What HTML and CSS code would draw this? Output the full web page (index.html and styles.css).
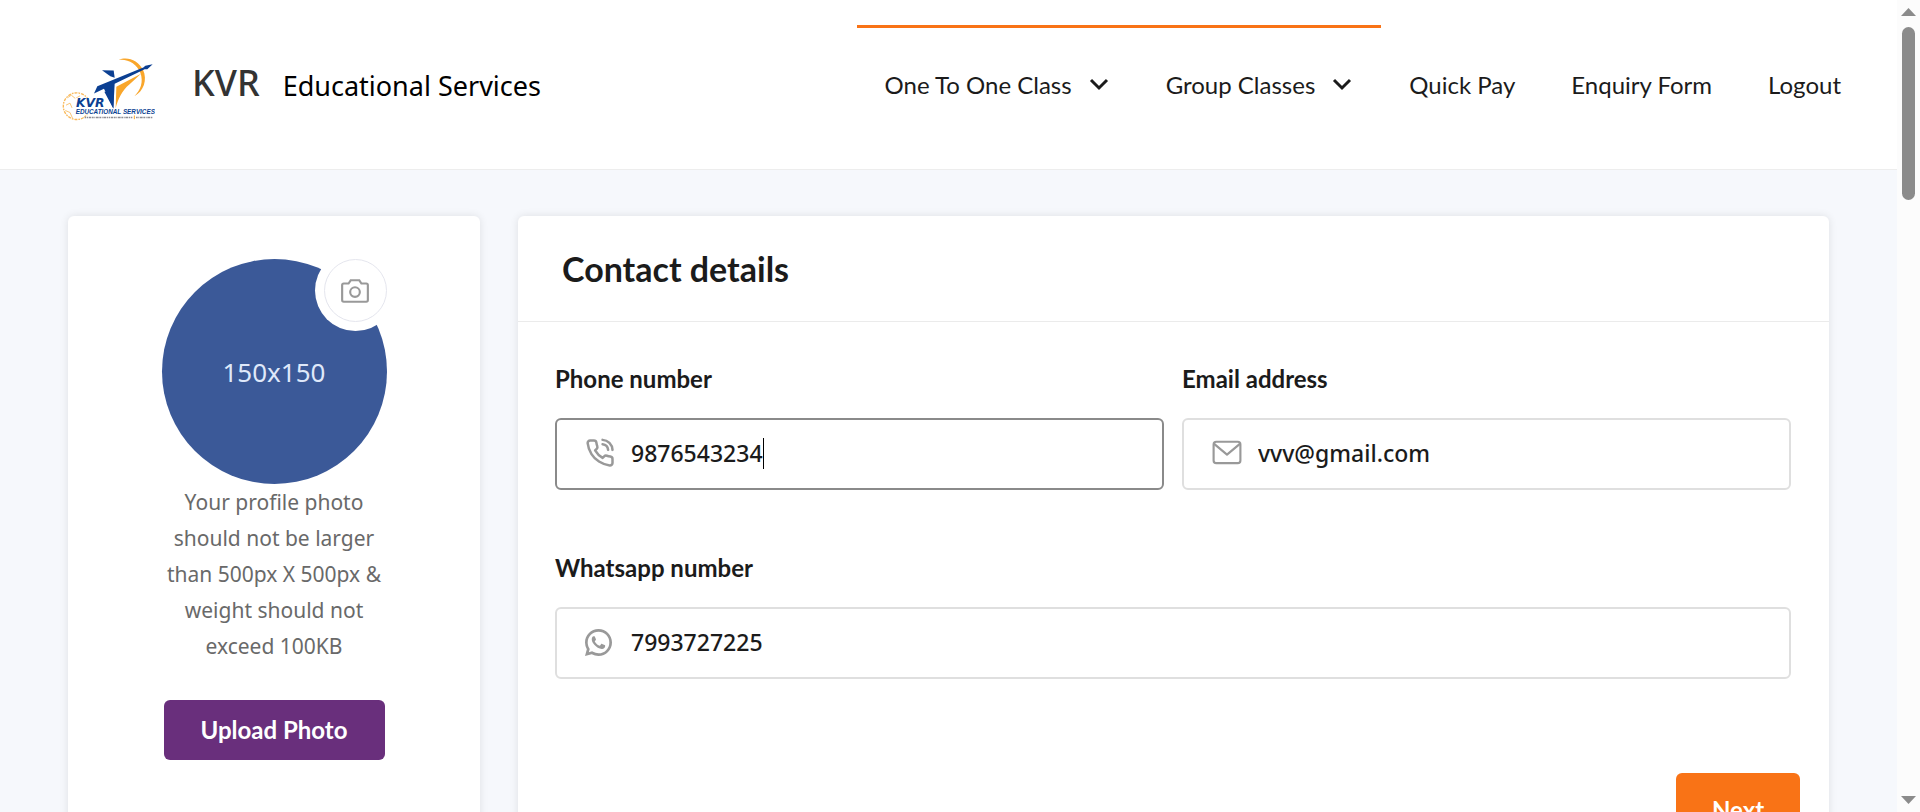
FILE: index.html
```html
<!DOCTYPE html>
<html lang="en">
<head>
<meta charset="utf-8">
<title>KVR Educational Services</title>
<link rel="stylesheet" href="styles.css">
</head>
<body>
<div class="page">
  <header class="header">
    <a class="brand" href="#">
      <svg class="logo" viewBox="60 40 285 200" aria-hidden="true">
        <path d="M236 54C262 42 296 56 309 84C323 114 311 149 283 163C302 146 311 120 301 93C291 66 263 50 236 54Z" fill="#f9a62b"/>
        <path d="M186 85L221 86L224 108L211 103Z" fill="#0b3f92"/>
        <path d="M162 155L172 133L310 77L316 72L338 67L322 82L314 82L224 126L220 200L192 141Z" fill="#0b3f92"/>
        <path d="M229 135L303 96L268 128C246 146 234 172 227 199Z" fill="#f9a62b"/>
        <circle cx="110" cy="193" r="40" fill="none" stroke="#f9b95a" stroke-width="4" stroke-dasharray="9 3 5 3" pathLength="250"/>
        <path d="M82 168L94 160L106 170L120 162M78 190L90 184L96 198M76 206L90 212L98 230" fill="none" stroke="#f9c679" stroke-width="3"/>
        <rect x="106" y="168" width="88" height="50" fill="#fff"/>
        <path d="M193 150L222 150L220 200L205 172Z" fill="#0b3f92"/>
        <text class="logo-name" x="108" y="197">KVR</text>
        <text class="logo-sub" x="107" y="216">EDUCATIONAL SERVICES</text>
        <path d="M134 227H279M288 227H338" stroke="#8d8d95" stroke-width="5" stroke-dasharray="5 2 3 2 8 2"/>
        <path d="M283 221V232" stroke="#f9a62b" stroke-width="3"/>
      </svg>
      <span class="brand-name">KVR</span>
      <span class="brand-sub">Educational Services</span>
    </a>
    <nav>
      <ul class="menu">
        <li class="marked"><a href="#">One To One Class <svg class="chevron" viewBox="0 0 22 22"><path d="M3 6L11 14L19 6"/></svg></a></li>
        <li class="marked"><a href="#">Group Classes <svg class="chevron" viewBox="0 0 22 22"><path d="M3 6L11 14L19 6"/></svg></a></li>
        <li><a href="#">Quick Pay</a></li>
        <li><a href="#">Enquiry Form</a></li>
        <li><a href="#">Logout</a></li>
      </ul>
    </nav>
  </header>
  <main class="content">
    <aside class="card profile">
      <div class="avatar">
        <span>150x150</span>
        <button class="camera" type="button" aria-label="Change photo">
          <svg viewBox="0 0 28 24"><path d="M8 5L10 2H18L20 5H24.500Q26 5 26 6.500V20.500Q26 22 24.500 22H3.500Q2 22 2 20.500V6.500Q2 5 3.500 5Z"/><circle cx="14" cy="13" r="4.500"/></svg>
        </button>
      </div>
      <p class="hint">Your profile photo should not be larger than 500px X 500px &amp; weight should not exceed 100KB</p>
      <button class="button upload" type="button">Upload Photo</button>
    </aside>
    <form class="card details">
      <h1 class="title">Contact details</h1>
      <div class="fields">
        <div class="field">
          <label for="phone">Phone number</label>
          <div class="control focused">
            <svg viewBox="0 0 24 24"><path d="M22 16.920v3a2 2 0 0 1-2.180 2 19.790 19.790 0 0 1-8.630-3.070 19.500 19.500 0 0 1-6-6A19.790 19.790 0 0 1 2.120 4.180 2 2 0 0 1 4.110 2h3a2 2 0 0 1 2 1.720c.127.960.361 1.903.7 2.810a2 2 0 0 1-.45 2.110L8.090 9.910a16 16 0 0 0 6 6l1.270-1.270a2 2 0 0 1 2.110-.45c.907.339 1.850.573 2.810.7A2 2 0 0 1 22 16.920zM14.050 5A5 5 0 0 1 18.500 9.500M14.050 1.500A8.500 8.500 0 0 1 22 9.500"/></svg>
            <input id="phone" class="sized" type="tel" value="9876543234"><span class="caret"></span>
          </div>
        </div>
        <div class="field">
          <label for="email">Email address</label>
          <div class="control">
            <svg viewBox="0 0 28 28"><rect x="1.500" y="3.500" width="25" height="20" rx="2.500"/><path d="M2 5.500L14 15.500L26 5.500"/></svg>
            <input id="email" type="email" value="vvv@gmail.com">
          </div>
        </div>
        <div class="field wide">
          <label for="whatsapp">Whatsapp number</label>
          <div class="control">
            <svg class="filled" viewBox="2 2 20 20"><path d="M7.254 18.494l.724.423A7.950 7.950 0 0 0 12 20a8 8 0 1 0-8-8c0 1.436.377 2.813 1.084 4.024l.423.724-.653 2.401 2.400-.655zM2.005 22l1.352-4.968A9.954 9.954 0 0 1 2 12C2 6.477 6.477 2 12 2s10 4.477 10 10-4.477 10-10 10a9.954 9.954 0 0 1-5.030-1.355L2.005 22z"/><path d="M8.400 7.310C8.800 7.270 9.120 7.250 9.320 7.700L10.100 9.500C10.200 9.800 10 10.200 9.400 10.900C9.250 11.100 9.200 11.200 9.350 11.450C10.200 12.900 11.100 13.700 12.500 14.300C12.800 14.440 13 14.400 13.200 14.200L14 13.200C14.200 12.940 14.400 12.950 14.700 13.060L16.500 13.900C16.850 14.070 16.970 14.150 16.950 14.500C16.900 15.700 16 16.700 14.600 16.800C12.700 16.900 10.300 15.400 8.900 13.700C7.600 12.200 7 10.900 7 9.600C7 8.500 7.500 7.400 8.400 7.310Z"/></svg>
            <input id="whatsapp" type="tel" value="7993727225">
          </div>
        </div>
      </div>
      <div class="actions"><button class="button next" type="button">Next</button></div>
    </form>
  </main>
</div>
<div class="scrollbar" aria-hidden="true">
  <svg viewBox="0 0 15 8"><path d="M0 8L7.500 0L15 8Z"/></svg>
  <span class="thumb"></span>
  <svg viewBox="0 0 15 8"><path d="M0 0H15L7.500 8Z"/></svg>
</div>
</body>
</html>
```
FILE: styles.css
```css
* { box-sizing: border-box; }
body {
  margin: 0;
  height: 100vh;
  overflow: hidden;
  display: grid;
  grid-template-columns: 1fr 23px;
  font-family: "Noto Sans", sans-serif;
  color: #1b1b1b;
}
.page { height: 100vh; overflow: hidden; background: #f6f8fc; }

.header {
  display: flex;
  justify-content: space-between;
  align-items: flex-start;
  padding: 25px 28px 0 60px;
  min-height: 170px;
  background: #fff;
  border-bottom: 1px solid #ededed;
}
.brand { display: flex; align-items: baseline; padding-top: 30px; text-decoration: none; }
.logo { width: 95px; height: 67px; align-self: flex-start; margin-right: 37px; }
.logo-name { font: italic bold 37px "DejaVu Sans", sans-serif; fill: #0b3f92; }
.logo-sub { font: italic bold 19px "Liberation Sans", sans-serif; fill: #0b3f92; }
.brand-name { font: 500 36px/56px "Noto Sans", sans-serif; color: #333; margin-right: 23px; }
.brand-sub { font-size: 27px; color: #000; }

.menu { display: flex; margin: 0; padding: 0; list-style: none; }
.menu li { padding: 0 28px; border-top: 3px solid transparent; }
.menu .marked { border-color: #f97316; }
.menu a {
  display: flex;
  align-items: center;
  gap: 16px;
  font: 24px/114px Lato, sans-serif;
  color: #1b1b1b;
  text-decoration: none;
  white-space: nowrap;
}
.chevron { width: 22px; height: 22px; fill: none; stroke: #1b1b1b; stroke-width: 3; }

.content {
  display: grid;
  grid-template-columns: 412px 1fr;
  gap: 38px;
  padding: 46px 68px;
}
.card { min-height: 720px; background: #fff; border-radius: 6px; box-shadow: 0 0 8px rgba(0, 0, 0, .1); }
.profile { display: flex; flex-direction: column; align-items: center; padding-top: 43px; }
.avatar {
  position: relative;
  display: grid;
  place-items: center;
  width: 225px;
  height: 225px;
  border-radius: 50%;
  background: #3b5998;
  color: #dfe8fa;
  font-size: 26px;
}
.camera {
  position: absolute;
  top: 0;
  right: 0;
  display: grid;
  place-items: center;
  width: 63px;
  height: 63px;
  padding: 0;
  border: 1px solid #e5e6ee;
  border-radius: 50%;
  background: #fff;
  box-shadow: 0 0 0 9px #fff;
}
.camera svg { width: 30px; height: 26px; fill: none; stroke: #999; stroke-width: 2; }
.hint { width: 225px; margin: 0; font-size: 21px; line-height: 36px; text-align: center; color: #696969; }
.button { border: 0; border-radius: 6px; color: #fff; font: bold 24px/60px Lato, sans-serif; }
.upload { width: 221px; margin-top: 36px; padding: 0; background: #692f7c; }

.title {
  margin: 0;
  padding: 0 44px;
  font: bold 34px/105px Lato, sans-serif;
  border-bottom: 1px solid #ebebeb;
}
.fields { display: grid; grid-template-columns: 1fr 1fr; gap: 60px 18px; padding: 39px 38px 0 37px; }
.wide { grid-column: span 2; }
.field label { display: block; font: bold 24px/36px Lato, sans-serif; margin-bottom: 21px; }
.control {
  display: flex;
  align-items: center;
  height: 72px;
  padding: 0 28px 2px;
  border: 2px solid #dfdfdf;
  border-radius: 6px;
}
.control.focused { border-color: #8a8a8a; }
.control svg { flex: none; width: 30px; height: 30px; margin-right: 16px; fill: none; stroke: #999; stroke-width: 2; stroke-linejoin: round; stroke-linecap: round; }
.control .filled { width: 27px; height: 27px; margin-right: 19px; fill: #999; stroke: none; }
.control input {
  flex: 1;
  min-width: 0;
  padding: 0;
  border: 0;
  outline: 0;
  background: none;
  font: 500 23px "Noto Sans", sans-serif;
  color: #1b1b1b;
}
.control .sized { flex: none; field-sizing: content; }
.caret { width: 1px; height: 31px; background: #000; }
.actions { display: flex; justify-content: flex-end; padding: 94px 29px 40px; }
.next { width: 124px; line-height: 72px; background: #f97316; }

.scrollbar {
  display: flex;
  flex-direction: column;
  align-items: center;
  padding: 8px 3px 8px 3px;
  background: #fcfcfc;
}
.scrollbar svg { width: 15px; height: 8px; fill: #8b8b8b; }
.scrollbar svg:last-child { margin-top: auto; }
.thumb { width: 13px; height: 173px; margin-top: 11px; border-radius: 7px; background: #8b8b8b; }
```
